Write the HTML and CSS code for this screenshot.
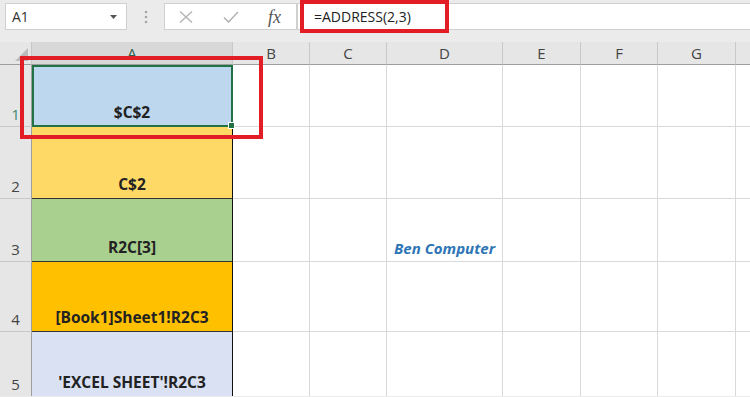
FILE: index.html
```html
<!DOCTYPE html>
<html lang="en">
<head>
  <meta charset="UTF-8">
  <title>ADDRESS function</title>
  <link rel="stylesheet" href="styles.css">
</head>
<body>
  <div class="bar">
    <div class="namebox">
      <span>A1</span>
      <svg class="caret" width="7" height="4" viewBox="0 0 7 4"><path d="M0 0h7L3.5 4z" fill="#555"/></svg>
    </div>
    <div class="dots">
      <svg width="4" height="14" viewBox="0 0 4 14"><circle cx="2" cy="2" r="1.3" fill="#a6a6a6"/><circle cx="2" cy="7" r="1.3" fill="#a6a6a6"/><circle cx="2" cy="12" r="1.3" fill="#a6a6a6"/></svg>
    </div>
    <div class="fbtns">
      <svg width="14" height="12" viewBox="0 0 14 12"><path d="M1 0.5L13 11.5M13 0.5L1 11.5" stroke="#b4b4b4" stroke-width="1.4" fill="none"/></svg>
      <svg width="16" height="12" viewBox="0 0 16 12"><path d="M1 6.5L5.5 11L15 1" stroke="#b4b4b4" stroke-width="1.6" fill="none"/></svg>
      <span class="fx">fx</span>
    </div>
    <div class="formula">=ADDRESS(2,3)</div>
  </div>

  <div class="sheet">
    <div class="corner"><span class="tri"></span></div>
    <div class="colhead sel">A</div>
    <div class="colhead">B</div>
    <div class="colhead">C</div>
    <div class="colhead">D</div>
    <div class="colhead">E</div>
    <div class="colhead">F</div>
    <div class="colhead">G</div>
    <div class="colhead"></div>

    <div class="rowhead sel">1</div>
    <div class="cell a blue active">$C$2</div>
    <div class="cell"></div><div class="cell"></div><div class="cell"></div><div class="cell"></div><div class="cell"></div><div class="cell"></div><div class="cell"></div>

    <div class="rowhead">2</div>
    <div class="cell a gold">C$2</div>
    <div class="cell"></div><div class="cell"></div><div class="cell"></div><div class="cell"></div><div class="cell"></div><div class="cell"></div><div class="cell"></div>

    <div class="rowhead">3</div>
    <div class="cell a green">R2C[3]</div>
    <div class="cell"></div><div class="cell"></div><div class="cell note">Ben Computer</div><div class="cell"></div><div class="cell"></div><div class="cell"></div><div class="cell"></div>

    <div class="rowhead">4</div>
    <div class="cell a orange">[Book1]Sheet1!R2C3</div>
    <div class="cell"></div><div class="cell"></div><div class="cell"></div><div class="cell"></div><div class="cell"></div><div class="cell"></div><div class="cell"></div>

    <div class="rowhead last">5</div>
    <div class="cell a lilac last">'EXCEL SHEET'!R2C3</div>
    <div class="cell last"></div><div class="cell last"></div><div class="cell last"></div><div class="cell last"></div><div class="cell last"></div><div class="cell last"></div><div class="cell last"></div>
  </div>

  <div class="mark mark-formula"></div>
  <div class="mark mark-cell"></div>
</body>
</html>
```

FILE: styles.css
```css
body {
  margin: 0;
  background: #ebebeb;
  font-family: "Open Sans", "Noto Sans", sans-serif;
  color: #222;
  overflow: hidden;
  height: 397px;
  position: relative;
}

/* formula bar */
.bar { display: flex; height: 27px; padding: 3px 0 0 5px; }
.namebox {
  width: 122px;
  box-sizing: border-box;
  background: #fff;
  border: 1px solid #d0d0d0;
  display: flex;
  align-items: center;
  justify-content: space-between;
  padding: 0 9px 0 6px;
  font-size: 14px;
  color: #333;
}
.dots { width: 37px; display: flex; align-items: center; justify-content: center; }
.fbtns {
  width: 133px;
  box-sizing: border-box;
  background: #fff;
  border: 1px solid #d0d0d0;
  display: flex;
  align-items: center;
  justify-content: space-between;
  padding: 0 15px 0 14px;
}
.fx {
  font-family: "Liberation Serif", serif;
  font-style: italic;
  font-size: 18px;
  color: #555;
  line-height: 1;
}
.formula {
  flex: 1;
  background: #fff;
  border: 1px solid #d0d0d0;
  border-right: none;
  font-size: 14px;
  color: #222;
  padding-left: 16px;
  line-height: 25px;
}

/* sheet grid */
.sheet {
  margin-top: 12px;
  display: grid;
  grid-template-columns: 32px 201px 77px 77px 116px 78px 77px 78px 40px;
  grid-template-rows: 23px 62px 72px 63px 70px 64px;
  background: #fff;
}
.corner {
  background: #e6e6e6;
  border-right: 1px solid #c6c6c6;
  border-bottom: 1px solid #9e9e9e;
  position: relative;
}
.tri {
  position: absolute;
  right: 3px;
  bottom: 3px;
  width: 0;
  height: 0;
  border-left: 13px solid transparent;
  border-bottom: 13px solid #bcbcbc;
}
.colhead {
  background: #e6e6e6;
  border-right: 1px solid #c8c8c8;
  border-bottom: 1px solid #9e9e9e;
  display: flex;
  align-items: center;
  justify-content: center;
  font-size: 15px;
  color: #444;
}
.colhead.sel { background: #d8d8d8; color: #2f5f4f; }
.rowhead {
  background: #e6e6e6;
  border-right: 1px solid #9e9e9e;
  border-bottom: 1px solid #c8c8c8;
  display: flex;
  align-items: flex-end;
  justify-content: center;
  padding-bottom: 2px;
  font-size: 15px;
  color: #444;
}
.rowhead.sel { color: #3f8b76; }
.cell {
  border-right: 1px solid #d9d9d9;
  border-bottom: 1px solid #d9d9d9;
  display: flex;
  align-items: flex-end;
  justify-content: center;
  padding-bottom: 3px;
  font-size: 14px;
  font-weight: bold;
  white-space: nowrap;
}
.cell.a { border-right-color: #111; border-bottom-color: #333; font-size: 15.5px; }
.last { border-bottom: none; }
.cell.a.last { border-bottom: none; }
.blue { background: #bdd7ee; }
.gold { background: #ffd966; }
.green { background: #a9d08e; }
.orange { background: #ffc000; }
.lilac { background: #d9e1f2; }
.note { color: #2e75b6; font-style: italic; font-size: 15px; }

.active {
  outline: 2px solid #217346;
  outline-offset: -2px;
  position: relative;
}
.active::after {
  content: "";
  position: absolute;
  right: -3px;
  bottom: -3px;
  width: 5px;
  height: 5px;
  background: #217346;
  border: 1px solid #fff;
}

/* red highlight boxes */
.mark { position: absolute; border: 4px solid #e21d25; box-sizing: border-box; }
.mark-formula { left: 300px; top: 0; width: 149px; height: 33px; }
.mark-cell { left: 20px; top: 56px; width: 243px; height: 83px; }
```
